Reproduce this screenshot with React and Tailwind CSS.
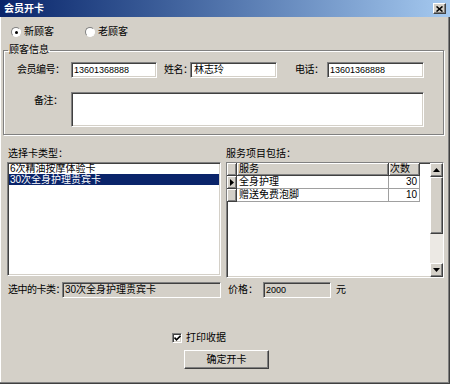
import React from "react";

const sunken =
  "border border-t-[#808080] border-l-[#808080] border-b-white border-r-white shadow-[inset_1px_1px_0_#404040,inset_-1px_-1px_0_#d4d0c8]";
const raised =
  "border border-t-white border-l-white border-b-[#404040] border-r-[#404040] shadow-[inset_-1px_-1px_0_#808080,inset_1px_1px_0_#d4d0c8]";
const hcell =
  "bg-[#d4d0c8] border-r border-b border-[#404040] shadow-[inset_1px_1px_0_#fff,inset_-1px_-1px_0_#808080]";
const dcell = "bg-white border-r border-b border-[#a0a0a0]";

function Radio({ checked }) {
  return (
    <span className="relative flex h-[10px] w-[10px] shrink-0 items-center justify-center rounded-full border border-t-[#808080] border-l-[#808080] border-b-white border-r-white bg-white">
      {checked && <span className="h-[3px] w-[3px] rounded-full bg-black" />}
    </span>
  );
}

function Arrow({ up }) {
  return (
    <svg width="7" height="4" viewBox="0 0 7 4">
      {up ? <polygon points="0,4 7,4 3.5,0" fill="#000" /> : <polygon points="0,0 7,0 3.5,4" fill="#000" />}
    </svg>
  );
}

export default function App() {
  return (
    <div className="flex h-[384px] w-[450px] flex-col overflow-hidden bg-[#d4d0c8] font-['Liberation_Sans','Noto_Sans_CJK_SC',sans-serif] text-[10px] leading-[12px] text-black shadow-[inset_-1px_-1px_0_#404040,inset_-2px_-2px_0_#808080,inset_1px_1px_0_#fff]">
      {/* title bar */}
      <div className="flex h-[17px] shrink-0 items-center justify-between bg-gradient-to-r from-[#0a246a] to-[#a6caf0] pl-[4px] pr-[4px]">
        <span className="font-bold text-white">会员开卡</span>
        <span className={`flex h-[11px] w-[13px] items-center justify-center bg-[#d4d0c8] ${raised}`}>
          <svg width="7" height="6" viewBox="0 0 7 6">
            <path d="M0.5 0.5 L6.5 5.5 M6.5 0.5 L0.5 5.5" stroke="#000" strokeWidth="1.6" />
          </svg>
        </span>
      </div>

      {/* radios */}
      <div className="mt-[9px] ml-[11px] flex h-[12px] items-center">
        <div className="flex w-[74px] items-center gap-[3px]">
          <Radio checked />
          <span>新顾客</span>
        </div>
        <div className="flex items-center gap-[3px]">
          <Radio />
          <span>老顾客</span>
        </div>
      </div>

      {/* group */}
      <fieldset className="mt-[6px] ml-[3px] w-[441px] border border-[#808080] pt-[6px] pb-[7px] shadow-[inset_1px_1px_0_#fff,1px_1px_0_#fff]">
        <legend className="ml-[4px] px-[1px] leading-[12px]">顾客信息</legend>
        <div className="flex h-[16px] items-center pl-[13px]">
          <span className="w-[54px] whitespace-nowrap tracking-[-0.5px]">会员编号：</span>
          <div className={`flex h-[16px] w-[86px] items-center bg-white pl-[2px] text-[9px] ${sunken}`}>13601368888</div>
          <span className="ml-[7px] w-[26px] whitespace-nowrap tracking-[-0.5px]">姓名：</span>
          <div className={`flex h-[16px] w-[87px] items-center bg-white pl-[3px] ${sunken}`}>林志玲</div>
          <span className="ml-[18px] w-[32px] whitespace-nowrap tracking-[-0.5px]">电话：</span>
          <div className={`flex h-[16px] w-[97px] items-center bg-white pl-[2px] text-[9px] ${sunken}`}>13601368888</div>
        </div>
        <div className="mt-[14px] flex pl-[30px]">
          <span className="mt-[3px] w-[37px] whitespace-nowrap tracking-[-0.5px]">备注：</span>
          <div className={`h-[35px] w-[353px] bg-white ${sunken}`} />
        </div>
      </fieldset>

      {/* lists */}
      <div className="mt-[13px] flex items-start pl-[7px]">
        <div className="flex w-[214px] flex-col">
          <span className="h-[12px] pl-[1px]">选择卡类型：</span>
          <div className={`mt-[2px] flex h-[114px] flex-col bg-white pt-[1px] pl-[1px] pr-[1px] ${sunken}`}>
            <div className="h-[10px] pl-[1px] leading-[10px]">6次精油按摩体验卡</div>
            <div className="h-[11px] bg-[#0a246a] pl-[1px] leading-[11px] text-white">30次全身护理贵宾卡</div>
          </div>
        </div>
        <div className="ml-[5px] flex w-[218px] flex-col">
          <span className="h-[12px]">服务项目包括：</span>
          <div className={`mt-[2px] flex h-[116px] bg-white ${sunken}`}>
            <div className="flex flex-1 flex-col">
              <div className="flex h-[13px]">
                <div className={`w-[10px] ${hcell}`} />
                <div className={`w-[152px] pl-[2px] leading-[12px] ${hcell}`}>服务</div>
                <div className={`w-[31px] pl-[1px] leading-[12px] ${hcell}`}>次数</div>
              </div>
              <div className="flex h-[13px]">
                <div className={`flex w-[10px] items-center justify-center ${hcell}`}>
                  <svg width="4" height="7" viewBox="0 0 4 7">
                    <polygon points="0,0 4,3.5 0,7" fill="#000" />
                  </svg>
                </div>
                <div className={`w-[152px] pl-[2px] leading-[12px] ${dcell}`}>全身护理</div>
                <div className={`w-[31px] pr-[2px] text-right leading-[12px] ${dcell}`}>30</div>
              </div>
              <div className="flex h-[13px]">
                <div className={`w-[10px] ${hcell}`} />
                <div className={`w-[152px] pl-[2px] leading-[12px] ${dcell}`}>赠送免费泡脚</div>
                <div className={`w-[31px] pr-[2px] text-right leading-[12px] ${dcell}`}>10</div>
              </div>
            </div>
            <div className="flex w-[13px] flex-col bg-[#ece9e4]">
              <div className={`flex h-[14px] items-center justify-center bg-[#d4d0c8] ${raised}`}>
                <Arrow up />
              </div>
              <div className={`h-[57px] bg-[#d4d0c8] ${raised}`} />
              <div className="flex-1" />
              <div className={`flex h-[14px] items-center justify-center bg-[#d4d0c8] ${raised}`}>
                <Arrow />
              </div>
            </div>
          </div>
        </div>
      </div>

      {/* selected card */}
      <div className="mt-[4px] flex h-[16px] items-center pl-[8px]">
        <span className="w-[54px] whitespace-nowrap tracking-[-0.5px]">选中的卡类：</span>
        <div className={`flex h-[16px] w-[159px] items-center bg-[#d4d0c8] pl-[2px] ${sunken}`}>30次全身护理贵宾卡</div>
        <span className="ml-[7px] w-[35px] whitespace-nowrap">价格：</span>
        <div className={`flex h-[16px] w-[68px] items-center bg-[#d4d0c8] pl-[2px] text-[9px] ${sunken}`}>2000</div>
        <span className="ml-[5px]">元</span>
      </div>

      {/* checkbox */}
      <div className="mt-[34px] flex h-[12px] items-center pl-[172px]">
        <span className={`flex h-[10px] w-[10px] items-center justify-center bg-white ${sunken}`}>
          <svg width="7" height="6" viewBox="0 0 7 6">
            <path d="M0.5 2.5 L2.5 4.8 L6.5 0.8" stroke="#000" strokeWidth="1.6" fill="none" />
          </svg>
        </span>
        <span className="ml-[4px]">打印收据</span>
      </div>

      {/* button */}
      <div className="mt-[6px] pl-[184px]">
        <div className={`flex h-[19px] w-[85px] items-center justify-center bg-[#d4d0c8] ${raised}`}>确定开卡</div>
      </div>
    </div>
  );
}
